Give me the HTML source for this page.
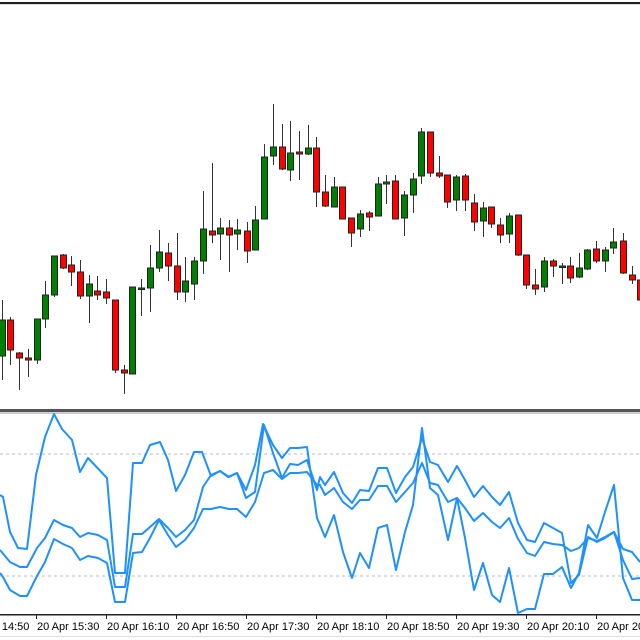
<!DOCTYPE html>
<html><head><meta charset="utf-8"><style>
html,body{margin:0;padding:0;background:#fff;width:640px;height:640px;overflow:hidden}
svg{display:block}
text{font-family:"Liberation Sans",sans-serif;font-size:11px;fill:#000}
</style></head><body>
<svg id="s" width="640" height="640" xmlns="http://www.w3.org/2000/svg">
<rect x="0" y="0" width="640" height="640" fill="#fff"/>
<rect x="0" y="2" width="640" height="2" fill="#222"/>
<rect x="0" y="4" width="640" height="1" fill="#ddd"/>
<rect x="0" y="409" width="640" height="3" fill="#555"/>
<rect x="0" y="412" width="640" height="2" fill="#ccc"/>
<line x1="0" y1="454" x2="640" y2="454" stroke="#bbb" stroke-dasharray="3,3"/>
<line x1="0" y1="576" x2="640" y2="576" stroke="#bbb" stroke-dasharray="3,3"/>
<g id="c"></g>
<g fill="none" stroke="#1e90ff" stroke-width="2" stroke-linejoin="round">
<polyline points="0,495 3,497 10,532 18,548 27,549 36,475 45,437 54,414 62,429 72,440 80,472 88,458 107,478 115,573 125,573 133,463 142,463 150,445 160,442 168,460 176,491 185,475 194,452 202,452 211,476 220,471 228,477 237,473 246,490 255,465 263,424 273,445 282,458 290,448 298,448 307,447 317,518 320,525 325,537 334,515 343,552 352,578 360,553 369,568 378,528 387,525 396,570 405,532 413,505 422,428 430,488 438,495 448,540 457,498 465,538 474,590 483,563 492,595 500,602 509,568 518,613 527,609 535,609 544,574 553,574 562,567 571,588 579,573 588,525 597,538 605,512 614,485 623,578 632,600 640,600"/>
<polyline points="0,550 10,562 20,567 27,567 37,548 45,538 54,520 63,525 72,528 80,537 88,533 98,535 107,540 115,587 125,587 133,534 142,534 150,527 159,519 168,528 176,537 185,530 194,520 203,487 211,475 220,471 229,477 237,473 246,498 255,492 264,425 273,453 282,478 290,464 298,465 307,460 317,490 320,477 325,485 334,472 343,493 352,503 360,490 369,491 378,468 387,468 396,493 405,477 413,467 422,438 430,462 438,465 448,482 457,466 465,480 474,497 483,486 492,497 500,505 509,492 518,523 527,540 535,542 544,523 553,528 562,533 571,583 579,575 588,537 597,542 605,538 614,532 623,560 632,579 640,578"/>
<polyline points="0,573 3,577 10,590 20,596 27,596 37,576 45,562 54,539 63,544 72,548 80,560 88,556 98,558 107,563 115,602 125,602 133,553 142,552 150,538 159,520 168,535 176,547 185,540 194,528 203,509 211,509 220,507 229,509 237,509 246,517 255,502 264,473 273,470 282,479 290,473 298,473 307,472 317,485 320,485 325,495 334,488 343,502 352,509 360,500 369,500 378,486 387,486 396,502 405,492 413,483 422,463 430,483 438,485 448,502 457,498 465,508 474,521 483,513 492,522 500,528 509,518 518,539 527,553 535,556 544,542 553,544 562,545 571,551 579,548 588,538 597,541 605,537 614,532 623,549 632,552 640,562"/>
</g>
<rect x="0" y="614" width="640" height="1.5" fill="#222"/>
<rect x="0" y="636" width="640" height="1" fill="#ddd"/>
<g id="ax"></g>
</svg>
<script>
var D=[[2,300,320,356,380,'g'],[10,317,320,350,365,'r'],[19,352,353,358,390,'r'],[28,349,358,360,377,'r'],[37,319,319,360,364,'g'],[45,281,295,319,328,'g'],[54,256,256,295,297,'g'],[63,254,255,268,269,'r'],[71,256,265,272,286,'r'],[80,260,272,296,299,'r'],[89,275,284,296,323,'g'],[97,276,291,295,300,'r'],[106,279,292,298,304,'r'],[115,300,300,370,373,'r'],[124,365,370,373,394,'r'],[132,287,287,374,374,'g'],[141,279,288,289,316,'g'],[150,245,268,288,312,'g'],[159,230,252,268,272,'g'],[168,243,253,266,281,'r'],[177,233,266,292,300,'r'],[185,257,281,292,302,'g'],[194,257,261,284,300,'g'],[203,191,229,261,274,'g'],[212,163,231,235,243,'r'],[220,218,228,234,260,'g'],[229,220,228,235,272,'r'],[237,219,230,234,250,'g'],[247,222,231,251,263,'r'],[255,206,220,250,250,'g'],[264,144,157,219,219,'g'],[273,104,147,156,165,'g'],[282,124,147,169,170,'r'],[290,121,153,170,181,'g'],[299,131,152,154,180,'r'],[308,125,148,154,155,'g'],[316,137,148,192,207,'r'],[325,175,192,206,207,'r'],[334,177,187,207,207,'g'],[342,187,187,219,219,'r'],[351,218,218,233,247,'r'],[360,210,214,229,237,'g'],[369,211,213,217,231,'r'],[378,177,184,216,216,'g'],[386,175,182,184,204,'g'],[395,175,181,219,219,'r'],[404,191,195,218,236,'g'],[413,173,179,195,213,'g'],[421,128,132,176,184,'g'],[430,132,132,173,177,'r'],[439,156,173,176,178,'r'],[447,175,175,202,208,'r'],[456,175,177,200,211,'g'],[465,174,176,200,211,'r'],[474,194,203,222,231,'r'],[483,202,208,221,237,'g'],[491,207,207,224,228,'r'],[500,218,225,235,243,'r'],[509,213,216,234,243,'g'],[518,215,215,255,256,'r'],[526,255,255,285,289,'r'],[535,269,285,289,295,'r'],[544,257,261,287,292,'g'],[553,259,261,266,277,'r'],[562,263,266,267,284,'g'],[570,257,266,278,283,'r'],[579,253,268,277,278,'g'],[587,249,250,269,270,'g'],[596,241,249,261,263,'r'],[605,247,250,261,272,'g'],[613,228,242,248,254,'g'],[623,233,241,273,274,'r'],[632,266,275,280,284,'r'],[640,276,280,300,305,'r']];
var ns='http://www.w3.org/2000/svg',g=document.getElementById('c'),h='';
D.forEach(function(d){var x=d[0];h+='<line x1="'+(x+.5)+'" y1="'+d[1]+'" x2="'+(x+.5)+'" y2="'+d[4]+'" stroke="#333" stroke-width="1"/>';
var hh=Math.max(d[3]-d[2],1.5);h+='<rect x="'+(x-2.5)+'" y="'+d[2]+'" width="6" height="'+hh+'" fill="'+(d[5]=='g'?'#008000':'#ff0000')+'" stroke="#222" stroke-width="1"/>';});
g.innerHTML=h;
var L=['14:50','15:30','16:10','16:50','17:30','18:10','18:50','19:30','20:10','20:50'],a='';
L.forEach(function(t,i){var x=-34+70*i;a+='<rect x="'+x+'" y="615" width="1" height="4" fill="#222"/><text x="'+(x+1)+'" y="630">20 Apr '+t+'</text>';});
document.getElementById('ax').innerHTML=a;
</script>
</body></html>
